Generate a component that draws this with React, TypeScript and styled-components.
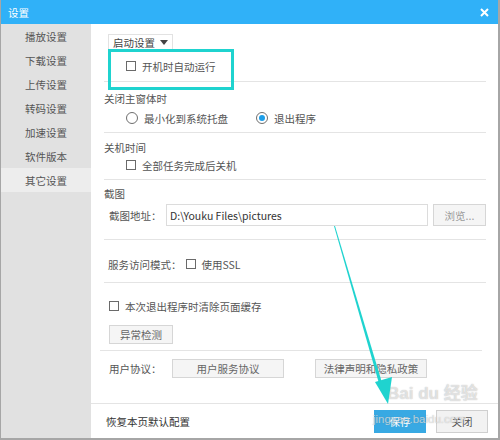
import React from "react";
import styled, { createGlobalStyle } from "styled-components";

const Global = createGlobalStyle`
  html, body { margin: 0; padding: 0; background: #fff; }
  * { box-sizing: border-box; }
  body { font-family: "Noto Sans CJK SC", "Noto Sans", sans-serif; font-size: 10.5px; }
`;

const Window = styled.div`
  position: relative;
  width: 500px;
  height: 440px;
  display: flex;
  flex-direction: column;
  border-left: 1px solid #a6a6a6;
  border-right: 2px solid #a6a6a6;
  border-bottom: 2px solid #a6a6a6;
  background: #fff;
  overflow: hidden;
`;

const TitleBar = styled.div`
  height: 24px;
  flex: none;
  background: #30b1f8;
  display: flex;
  align-items: center;
  justify-content: space-between;
  padding: 0 9px 0 7px;
  color: #fff;
  font-size: 10.5px;
`;

const Body = styled.div`
  flex: 1;
  display: flex;
  min-height: 0;
`;

const Sidebar = styled.div`
  width: 90px;
  flex: none;
  background: #e1e1e1;
  display: flex;
  flex-direction: column;
`;

const NavItem = styled.div<{ $active?: boolean }>`
  height: 24px;
  display: flex;
  align-items: center;
  padding-left: 24px;
  color: #555;
  background: ${(p) => (p.$active ? "#ededed" : "transparent")};
`;

const Content = styled.div`
  flex: 1;
  display: flex;
  flex-direction: column;
  min-width: 0;
`;

const Main = styled.div`
  height: 379px;
  flex: none;
  display: flex;
  flex-direction: column;
`;

const Section = styled.div<{ $pt: number; $pb: number; $last?: boolean; $ml?: number; $mr?: number }>`
  margin: 0 ${(p) => p.$mr ?? 12}px 0 ${(p) => p.$ml ?? 13}px;
  padding: ${(p) => p.$pt}px 0 ${(p) => p.$pb}px 0;
  border-bottom: ${(p) => (p.$last ? "none" : "1px solid #e4e4e4")};
  display: flex;
  flex-direction: column;
  align-items: flex-start;
`;

const Title = styled.div`
  height: 20px;
  display: flex;
  align-items: center;
  color: #555;
`;

const Row = styled.div<{ $h: number; $pl?: number; $mt?: number; $gap?: number }>`
  height: ${(p) => p.$h}px;
  margin-top: ${(p) => p.$mt ?? 0}px;
  padding-left: ${(p) => p.$pl ?? 0}px;
  display: flex;
  align-items: center;
  gap: ${(p) => p.$gap ?? 0}px;
  color: #555;
  align-self: stretch;
`;

const Dropdown = styled.div`
  margin-left: 4px;
  height: 17px;
  width: 65px;
  border: 1px solid #e2e2e2;
  display: flex;
  align-items: center;
  gap: 5px;
  padding-left: 4px;
  color: #444;
`;

const Caret = styled.span`
  width: 0;
  height: 0;
  border-left: 4px solid transparent;
  border-right: 4px solid transparent;
  border-top: 5px solid #444;
`;

const Check = styled.label`
  display: flex;
  align-items: center;
  gap: 6px;
  color: #555;
`;

const Box = styled.span`
  width: 10px;
  height: 10px;
  border: 1px solid #6a6a6a;
  background: #fff;
  flex: none;
`;

const Radio = styled.span<{ $on?: boolean }>`
  width: 12px;
  height: 12px;
  border-radius: 50%;
  border: 1px solid #6e6e6e;
  flex: none;
  display: flex;
  align-items: center;
  justify-content: center;
  &::after {
    content: "";
    width: 6px;
    height: 6px;
    border-radius: 50%;
    background: ${(p) => (p.$on ? "#1d9ee8" : "transparent")};
  }
`;

const Label = styled.span<{ $w?: number }>`
  width: ${(p) => (p.$w ? `${p.$w}px` : "auto")};
  flex: none;
  color: #555;
`;

const Input = styled.div`
  width: 266px;
  height: 22px;
  border: 1px solid #dcdcdc;
  display: flex;
  align-items: center;
  padding-left: 3px;
  color: #333;
`;

const Button = styled.div<{ $w: number; $h?: number; $dim?: boolean; $ml?: number }>`
  width: ${(p) => p.$w}px;
  height: ${(p) => p.$h ?? 19}px;
  margin-left: ${(p) => p.$ml ?? 0}px;
  border: 1px solid #d6d6d6;
  background: #f5f5f5;
  color: ${(p) => (p.$dim ? "#9a9a9a" : "#666")};
  display: flex;
  align-items: center;
  justify-content: center;
  flex: none;
`;

const Footer = styled.div`
  flex: 1;
  border-top: 1px solid #e4e4e4;
  display: flex;
  align-items: center;
  padding: 0 10px 0 15px;
  gap: 10px;
`;

const FooterText = styled.span`
  flex: 1;
  color: #333;
`;

const PrimaryButton = styled.div`
  width: 52px;
  height: 23px;
  background: #38a9e3;
  color: #fff;
  display: flex;
  align-items: center;
  justify-content: center;
`;

const GhostButton = styled.div`
  width: 52px;
  height: 23px;
  border: 1px solid #cfcfcf;
  background: #f2f2f2;
  color: #555;
  display: flex;
  align-items: center;
  justify-content: center;
`;

const Overlay = styled.svg`
  position: absolute;
  left: 0;
  top: 0;
  pointer-events: none;
`;

const Watermark = styled.div`
  position: absolute;
  left: 372px;
  top: 385px;
  width: 110px;
  display: flex;
  flex-direction: column;
  align-items: flex-start;
  white-space: nowrap;
  pointer-events: none;
  color: rgba(255, 255, 255, 0.6);
  text-shadow: 0 0 1px rgba(110, 110, 110, 0.55);
  font-family: "Liberation Sans", "Noto Sans CJK SC", sans-serif;
  line-height: 1;
`;

const WmBig = styled.span`
  font-size: 17px;
  font-weight: bold;
  margin-left: 14px;
`;

const WmSmall = styled.span`
  font-size: 11.5px;
  margin-top: 12px;
`;

export default function App() {
  const nav = ["播放设置", "下载设置", "上传设置", "转码设置", "加速设置", "软件版本", "其它设置"];
  return (
    <>
      <Global />
      <Window>
        <TitleBar>
          <span>设置</span>
          <svg width="9" height="9" viewBox="0 0 9 9">
            <path d="M1 1 L8 8 M8 1 L1 8" stroke="#fff" strokeWidth="2" />
          </svg>
        </TitleBar>
        <Body>
          <Sidebar>
            {nav.map((n, i) => (
              <NavItem key={n} $active={i === 6}>
                {n}
              </NavItem>
            ))}
          </Sidebar>
          <Content>
            <Main>
              <Section $pt={10} $pb={0}>
                <Dropdown>
                  启动设置 <Caret />
                </Dropdown>
                <Row $h={30} $pl={22}>
                  <Check>
                    <Box />
                    开机时自动运行
                  </Check>
                </Row>
              </Section>
              <Section $pt={6} $pb={4}>
                <Title>关闭主窗体时</Title>
                <Row $h={20} $pl={22} $gap={28}>
                  <Check>
                    <Radio />
                    最小化到系统托盘
                  </Check>
                  <Check>
                    <Radio $on />
                    退出程序
                  </Check>
                </Row>
              </Section>
              <Section $pt={4} $pb={6}>
                <Title>关机时间</Title>
                <Row $h={16} $pl={22}>
                  <Check>
                    <Box />
                    全部任务完成后关机
                  </Check>
                </Row>
              </Section>
              <Section $pt={3} $pb={13}>
                <Title>截图</Title>
                <Row $h={22} $pl={5} $mt={1}>
                  <Label $w={57}>截图地址：</Label>
                  <Input>D:\Youku Files\pictures</Input>
                  <Button $w={53} $h={22} $dim $ml={5}>
                    浏览...
                  </Button>
                </Row>
              </Section>
              <Section $pt={14} $pb={8}>
                <Row $h={20} $pl={4} $gap={4}>
                  <Label>服务访问模式：</Label>
                  <Check>
                    <Box />
                    使用SSL
                  </Check>
                </Row>
              </Section>
              <Section $pt={13} $pb={6} $ml={9} $mr={16}>
                <Row $h={20} $pl={9}>
                  <Check>
                    <Box />
                    本次退出程序时清除页面缓存
                  </Check>
                </Row>
                <Row $h={19} $pl={9} $mt={9}>
                  <Button $w={64}>异常检测</Button>
                </Row>
              </Section>
              <Section $pt={8} $pb={0} $last>
                <Row $h={19} $pl={5}>
                  <Label $w={63}>用户协议：</Label>
                  <Button $w={112}>用户服务协议</Button>
                  <Button $w={112} $ml={31}>
                    法律声明和隐私政策
                  </Button>
                </Row>
              </Section>
            </Main>
            <Footer>
              <FooterText>恢复本页默认配置</FooterText>
              <PrimaryButton>保存</PrimaryButton>
              <GhostButton>关闭</GhostButton>
            </Footer>
          </Content>
        </Body>
        <Watermark>
          <WmBig>Bai du 经验</WmBig>
          <WmSmall>jingyan.baidu.com</WmSmall>
        </Watermark>
        <Overlay width="500" height="440" viewBox="0 0 500 440">
          <rect x="108.5" y="50.5" width="123" height="38" fill="none" stroke="#1fd3cf" strokeWidth="3" />
          <polygon points="333,226 334,226 382,386 379,387" fill="#1fd3cf" />
          <polygon points="374,382 391,377 387,404" fill="#1fd3cf" />
        </Overlay>
      </Window>
    </>
  );
}
